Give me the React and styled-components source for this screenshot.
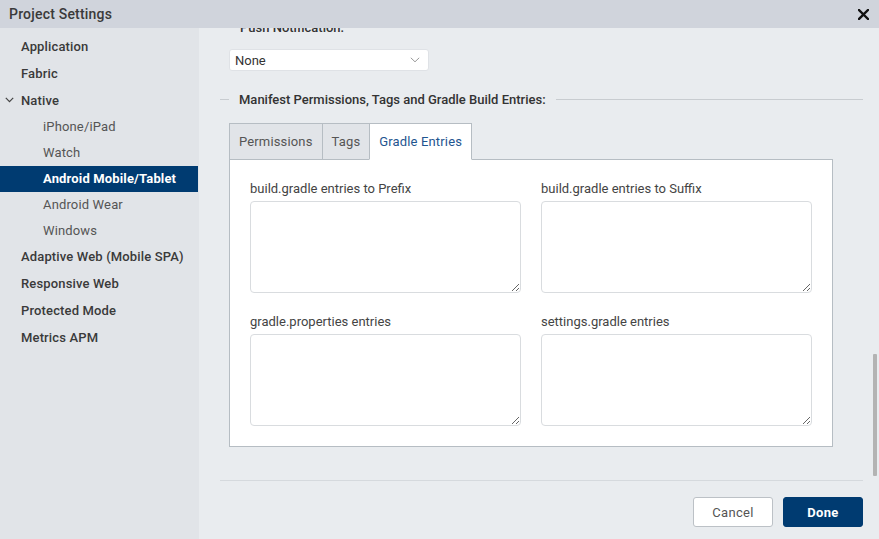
import React from 'react';
import styled, { createGlobalStyle } from 'styled-components';

const GlobalStyle = createGlobalStyle`
    html, body {
        margin: 0;
        padding: 0;
    }
    body {
        font-family: Roboto, "Liberation Sans", sans-serif;
        color: #333;
    }
    * {
        box-sizing: border-box;
    }
`;

const Dialog = styled.div`
    width: 879px;
    height: 539px;
    display: flex;
    flex-direction: column;
    overflow: hidden;
    background: #e9ecef;
`;

const TitleBar = styled.div`
    height: 28px;
    flex-shrink: 0;
    display: flex;
    align-items: center;
    justify-content: space-between;
    padding: 0 9px 0 9px;
    background: #d0d4dc;
    position: relative;
    z-index: 2;
    .title {
        font-size: 14px;
        font-weight: 500;
        letter-spacing: 0.2px;
        color: #3a3a3a;
    }
`;

const CloseButton = styled.button`
    border: 0;
    background: none;
    padding: 0;
    width: 14px;
    height: 14px;
    display: flex;
    align-items: center;
    justify-content: center;
    cursor: pointer;
`;

const Body = styled.div`
    flex: 1;
    display: flex;
    min-height: 0;
`;

const Sidebar = styled.nav`
    width: 199px;
    flex-shrink: 0;
    background: #e1e4e8;
    padding-top: 5px;
    display: flex;
    flex-direction: column;
`;

// sub entries sit a pixel tighter against the next top-level entry
const SubList = styled.div`
    display: flex;
    flex-direction: column;
    margin-bottom: -1px;
`;

const NavItem = styled.div`
    height: ${(p) => (p.$sub ? '26px' : '27px')};
    width: 198px;
    display: flex;
    align-items: center;
    padding-left: ${(p) => (p.$sub ? '43px' : '21px')};
    font-size: 13px;
    letter-spacing: 0.15px;
    font-weight: ${(p) => (p.$active ? 700 : p.$sub ? 400 : 500)};
    color: ${(p) => (p.$active ? '#fff' : p.$sub ? '#555' : '#3a3a3a')};
    background: ${(p) => (p.$active ? '#003b71' : 'transparent')};
    position: relative;
    padding-bottom: 1px;
    .chev {
        position: absolute;
        left: 5px;
        top: 50%;
        margin-top: -4px;
    }
`;

const Main = styled.div`
    flex: 1;
    display: flex;
    flex-direction: column;
    position: relative;
    min-width: 0;
`;

const ScrollArea = styled.div`
    flex: 1;
    overflow: hidden;
    padding: 0 16px 0 21px;
`;

const ClippedLabel = styled.div`
    margin-top: -8px;
    padding-left: 20px;
    font-size: 13px;
    line-height: 16px;
    color: #333;
    font-weight: 500;
`;

const Select = styled.div`
    margin: 13px 0 0 9px;
    width: 200px;
    height: 22px;
    background: #fff;
    border: 1px solid #dfe2e6;
    border-radius: 3px;
    display: flex;
    align-items: center;
    justify-content: space-between;
    padding: 0 8px 0 5px;
    font-size: 13px;
    color: #333;
`;

const Legend = styled.div`
    margin-top: 20px;
    height: 16px;
    display: flex;
    align-items: center;
    gap: 10px;
    font-size: 13px;
    font-weight: 500;
    color: #333;
    &::before {
        content: '';
        width: 9px;
        height: 1px;
        background: #c8ccd0;
    }
    &::after {
        content: '';
        flex: 1;
        height: 1px;
        background: #c8ccd0;
    }
`;

const TabSection = styled.div`
    margin: 16px 0 0 9px;
`;

const TabRow = styled.div`
    display: flex;
    position: relative;
    z-index: 1;
`;

const Tab = styled.div`
    height: 37px;
    padding: 0 9px;
    display: flex;
    align-items: center;
    font-size: 13px;
    letter-spacing: 0.15px;
    border: 1px solid #b6bdc3;
    border-bottom: ${(p) => (p.$active ? '1px solid #fff' : '1px solid #b6bdc3')};
    margin-left: -1px;
    &:first-child {
        margin-left: 0;
    }
    background: ${(p) => (p.$active ? '#fff' : '#e1e4e8')};
    color: ${(p) => (p.$active ? '#1f5590' : '#555')};
    padding-bottom: 1px;
`;

const Panel = styled.div`
    margin-top: -1px;
    width: 604px;
    background: #fff;
    border: 1px solid #b6bdc3;
    padding: 21px 20px 20px 20px;
    display: grid;
    grid-template-columns: 271px 271px;
    column-gap: 20px;
    row-gap: 21px;
`;

const Field = styled.div`
    display: flex;
    flex-direction: column;
    gap: 4px;
    label {
        font-size: 13px;
        line-height: 16px;
        color: #444;
    }
`;

const TextArea = styled.textarea`
    width: 271px;
    height: 92px;
    border: 1px solid #d9dcdf;
    border-radius: 4px;
    background: #fff;
    resize: both;
    margin: 0;
    font-family: Roboto, sans-serif;
`;

const Footer = styled.div`
    flex-shrink: 0;
    margin: 0 16px 0 21px;
    border-top: 1px solid #d5d9dd;
    height: 59px;
    display: flex;
    justify-content: flex-end;
    align-items: flex-start;
    padding-top: 16px;
    gap: 10px;
`;

const Button = styled.button`
    width: 80px;
    height: 30px;
    border-radius: 3px;
    font-family: Roboto, sans-serif;
    font-size: 13px;
    letter-spacing: 0.3px;
    cursor: pointer;
    border: 1px solid ${(p) => (p.$primary ? '#003b71' : '#bcc1c6')};
    background: ${(p) => (p.$primary ? '#003b71' : '#fff')};
    color: ${(p) => (p.$primary ? '#fff' : '#555')};
    font-weight: ${(p) => (p.$primary ? 700 : 400)};
`;

const ScrollThumb = styled.div`
    position: absolute;
    right: 2px;
    top: 326px;
    width: 4px;
    height: 122px;
    background: #b3b3b3;
    border-radius: 1px;
`;

const nativeChildren = [
    { label: 'iPhone/iPad' },
    { label: 'Watch' },
    { label: 'Android Mobile/Tablet', active: true },
    { label: 'Android Wear' },
    { label: 'Windows' },
];

const topBefore = ['Application', 'Fabric'];
const topAfter = ['Adaptive Web (Mobile SPA)', 'Responsive Web', 'Protected Mode', 'Metrics APM'];

const fields = [
    'build.gradle entries to Prefix',
    'build.gradle entries to Suffix',
    'gradle.properties entries',
    'settings.gradle entries',
];

const App = () => {
    return (
        <>
            <GlobalStyle />
            <Dialog>
                <TitleBar>
                    <span className="title">Project Settings</span>
                    <CloseButton aria-label="Close">
                        <svg width="11" height="11" viewBox="0 0 11 11">
                            <path d="M1 1 L10 10 M10 1 L1 10" stroke="#111" strokeWidth="2.4" strokeLinecap="square" />
                        </svg>
                    </CloseButton>
                </TitleBar>
                <Body>
                    <Sidebar>
                        {topBefore.map((l) => (
                            <NavItem key={l}>{l}</NavItem>
                        ))}
                        <NavItem>
                            <svg className="chev" width="9" height="6" viewBox="0 0 9 6">
                                <path d="M0.8 0.8 L4.5 4.6 L8.2 0.8" fill="none" stroke="#444" strokeWidth="1.2" />
                            </svg>
                            Native
                        </NavItem>
                        <SubList>
                            {nativeChildren.map((c) => (
                                <NavItem key={c.label} $sub $active={c.active}>
                                    {c.label}
                                </NavItem>
                            ))}
                        </SubList>
                        {topAfter.map((l) => (
                            <NavItem key={l}>{l}</NavItem>
                        ))}
                    </Sidebar>
                    <Main>
                        <ScrollArea>
                            <ClippedLabel>Push Notification:</ClippedLabel>
                            <Select>
                                <span>None</span>
                                <svg width="10" height="6" viewBox="0 0 10 6">
                                    <path d="M0.8 0.8 L5 4.8 L9.2 0.8" fill="none" stroke="#999" strokeWidth="1" />
                                </svg>
                            </Select>
                            <Legend>Manifest Permissions, Tags and Gradle Build Entries:</Legend>
                            <TabSection>
                                <TabRow>
                                    <Tab>Permissions</Tab>
                                    <Tab>Tags</Tab>
                                    <Tab $active>Gradle Entries</Tab>
                                </TabRow>
                                <Panel>
                                    {fields.map((f) => (
                                        <Field key={f}>
                                            <label>{f}</label>
                                            <TextArea />
                                        </Field>
                                    ))}
                                </Panel>
                            </TabSection>
                        </ScrollArea>
                        <Footer>
                            <Button>Cancel</Button>
                            <Button $primary>Done</Button>
                        </Footer>
                        <ScrollThumb />
                    </Main>
                </Body>
            </Dialog>
        </>
    );
};

export default App;
